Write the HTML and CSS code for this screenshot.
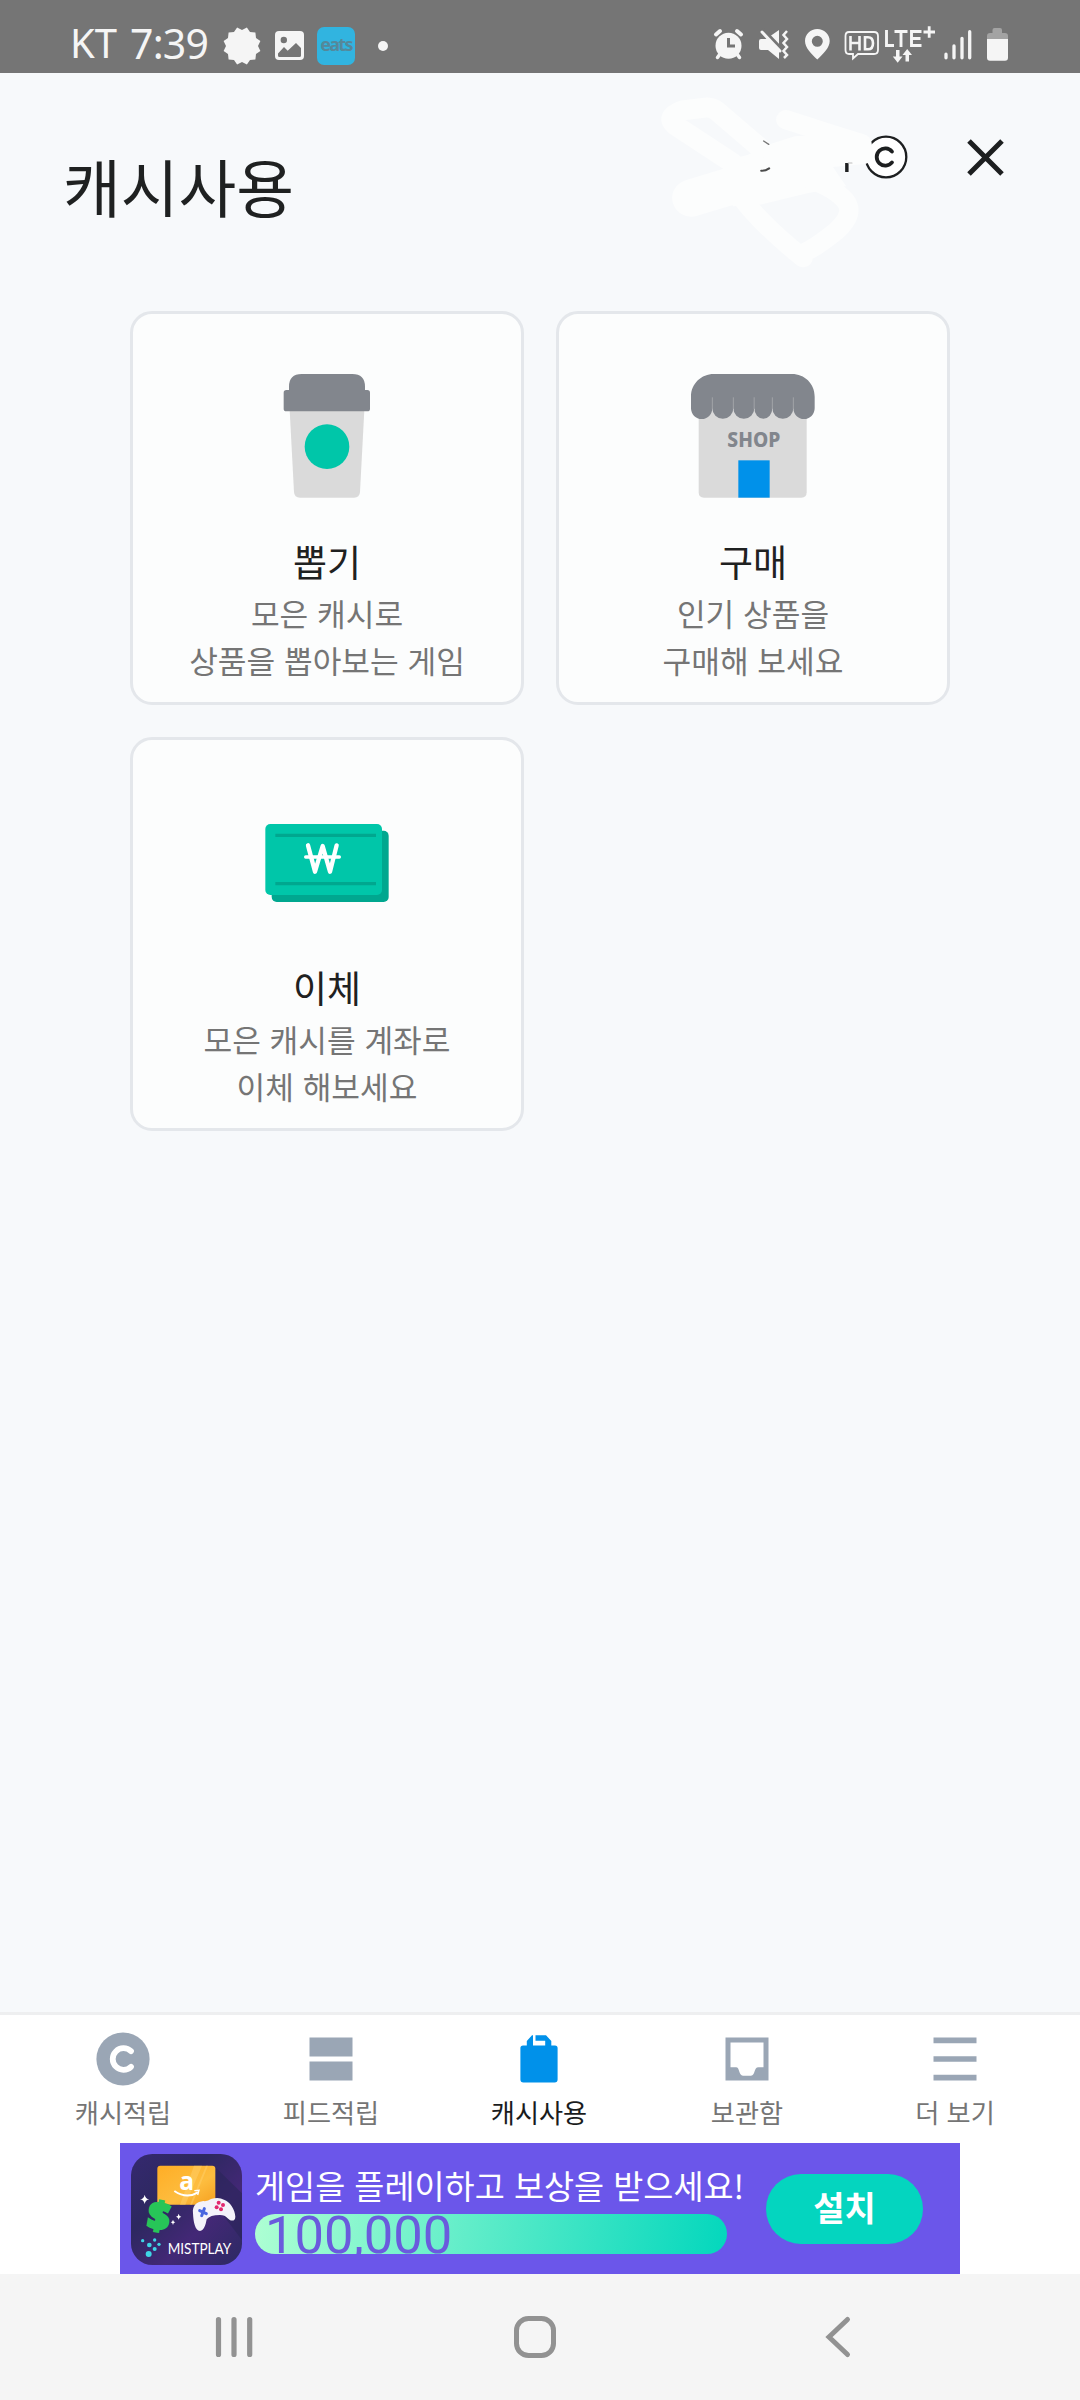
FILE: index.html
```html
<!DOCTYPE html>
<html lang="ko">
<head>
<meta charset="utf-8">
<title>캐시사용</title>
<link rel="stylesheet" href="styles.css">
</head>
<body>
<div class="app">
  <div class="status">
    <div class="status-left">
      <span class="carrier">KT</span><span class="clock">7:39</span>
      <svg class="ic-burst" viewBox="-19 -19 38 38" width="38" height="38"><path fill="#f5f5f5" d="M4.9 -18.4L8 -14L13.4 -13.4L14 -8L18.4 -4.9L16 0L18.4 4.9L14 8L13.4 13.4L8 14L4.9 18.4L0 16L-4.9 18.4L-8 14L-13.4 13.4L-14 8L-18.4 4.9L-16 0L-18.4 -4.9L-14 -8L-13.4 -13.4L-8 -14L-4.9 -18.4L0 -16Z"/></svg>
      <svg class="ic-image" viewBox="275 31 29 29" width="29" height="29"><rect x="275" y="31" width="29" height="29" rx="4" fill="#f5f5f5"/><circle cx="283.8" cy="40" r="3.2" fill="#757575"/><path fill="#757575" d="M278 53.5L284 47L287.7 50.7L296 43L301 48V55.5Q301 57 299.500 57H279.500Q278 57 278 55.500Z"/></svg>
      <span class="eats">eats</span>
      <span class="dot"></span>
    </div>
    <svg class="status-right" viewBox="700 20 320 50" width="320" height="50" fill="#f5f5f5" stroke="none">
      <circle cx="728.500" cy="45.700" r="13"/>
      <path d="M716 34.500L720 31M741 34.500L737 31" stroke="#f5f5f5" stroke-width="4" stroke-linecap="round"/>
      <path d="M720 54L717.500 57.500M737 54L739.500 57.500" stroke="#f5f5f5" stroke-width="3.500" stroke-linecap="round"/>
      <path d="M728.500 38V46H735" stroke="#757575" stroke-width="3" fill="none"/>
      <path d="M759 41Q759 39 761 39H766L779 30V59L768 50H761Q759 50 759 48Z"/>
      <path d="M762 29L782 50" stroke="#757575" stroke-width="4"/>
      <path d="M762 32L780 51" stroke="#f5f5f5" stroke-width="3" stroke-linecap="round"/>
      <path d="M787 31L783.500 35L787 39L783.500 43L787 47L783.500 51L787 55L784 58" stroke="#f5f5f5" stroke-width="2.500" fill="none"/>
      <path fill-rule="evenodd" d="M817.300 29C824 29 829.700 34 829.700 41C829.700 48 823 54 817.300 59.500C811.500 54 805 48 805 41C805 34 810.500 29 817.300 29ZM817.300 35.800A5.500 5.500 0 1 0 817.300 46.800A5.500 5.500 0 1 0 817.300 35.800Z"/>
      <path d="M849 32H874Q878 32 878 36V50Q878 54 874 54H858L853 58.500V54H849Q845.500 54 845.500 50V36Q845.500 32 849 32Z" fill="none" stroke="#f5f5f5" stroke-width="1.800"/>
      <path d="M850.500 36V50.500M859.500 36V50.500M850.500 43H859.500M865 37.200V49.300H868Q873 49.300 873 43.200Q873 37.200 868 37.200Z" fill="none" stroke="#f5f5f5" stroke-width="2.600"/>
      <path d="M886.500 30V45.500H894M894.500 31.500H907.500M901 31.500V47M921.500 31.500H911.500V45.500H921.500M911.500 38.500H920.500" fill="none" stroke="#f5f5f5" stroke-width="2.900"/>
      <path d="M923.500 32H935M929.200 26.300V37.700" stroke="#f5f5f5" stroke-width="2.800"/>
      <path d="M896 50H899.500V56.500H902.500L897.700 62.700L892.800 56.500H896ZM905.500 61.500H909V55H912L907.200 49L902.500 55H905.500Z"/>
      <path d="M946 54.200V57.800M954 46V57.800M962 38.300V57.800M969.700 31.700V57.800" stroke="#f5f5f5" stroke-width="3.300" stroke-linecap="round"/>
      <path fill="#a3a3a3" d="M992.500 33V30Q992.500 28 994.500 28H1000Q1002 28 1002 30V33H1005Q1008 33 1008 36V39H987V36Q987 33 990 33Z"/>
      <path d="M987 39H1008V57.500Q1008 60.700 1005 60.700H990Q987 60.700 987 57.500Z"/>
    </svg>
  </div>

  <header class="header">
    <h1>캐시사용</h1>
    <svg class="cash" viewBox="0 0 44 44" width="44" height="44" fill="none" stroke="#1d1f20"><circle cx="22" cy="22" r="20.300" fill="#fff" stroke-width="2.300"/><path d="M28 16.600A8.600 8.600 0 1 0 28 27.400" stroke-width="3.800" stroke-linecap="round"/></svg>
    <svg class="close" viewBox="0 0 37 37" width="37" height="37"><path d="M2 2L35 35M35 2L2 35" stroke="#1d1f20" stroke-width="5"/></svg>
    <svg class="scribble" viewBox="340 280 660 540" width="227" height="180" preserveAspectRatio="none" fill="none" stroke="#fcfdfd" stroke-linecap="round" stroke-linejoin="round">
      <path fill="#fcfdfd" stroke="none" d="M570 475L605 465L650 440L740 410L900 400L940 470L850 500L890 560L780 580L640 615L560 620Z"/>
      <path stroke-width="60" d="M640 445L515 335Q500 322 480 324L415 332Q355 355 405 385L560 490"/>
      <path stroke-width="112" d="M440 595L600 545L780 510"/>
      <path stroke-width="58" d="M715 360L850 405L935 432L940 464L780 480"/>
      <path stroke-width="56" d="M590 600Q650 680 765 775M765 760Q800 745 860 695Q920 640 885 600Q850 560 760 530"/>
      <path stroke="#777" stroke-width="4" d="M650 424L665 434"/>
      <path stroke="#4b4b4b" stroke-width="6" d="M643 513Q655 514 666 506"/>
      <path stroke="#1d1f20" stroke-width="10" stroke-linecap="butt" d="M892 490V517"/>
      <path stroke="#bbb" stroke-width="3" d="M896 490H907"/>
    </svg>
  </header>

  <main class="grid">
    <section class="card">
      <svg viewBox="435 222 372 372" width="124" height="124">
        <path fill="#dadada" d="M509 330H733L720 576Q719 593 702 593H540Q523 593 522 576Z"/>
        <path fill="#82868d" d="M507 270V260Q507 222 545 222H697Q735 222 735 260V270H742Q750 270 750 278V326Q750 334 742 334H499Q491 334 491 326V278Q491 270 499 270Z"/>
        <circle cx="621" cy="440" r="67" fill="#00c6a9"/>
      </svg>
      <h2>뽑기</h2>
      <p>모은 캐시로<br>상품을 뽑아보는 게임</p>
    </section>
    <section class="card">
      <svg viewBox="454 222 372 372" width="124" height="124">
        <path fill="#dadada" d="M477 330H801V577Q801 593 785 593H493Q477 593 477 577Z"/>
        <path fill="#82868d" d="M454 290C454 250 486 222 522 222H757C794 222 825 250 825 290V325A32 32 0 0 1 761 325A31.500 31.500 0 0 1 698 325A27 31 0 0 1 644 325A31.500 31.500 0 0 1 581 325A31.500 31.500 0 0 1 518 325A32 32 0 0 1 454 325Z"/>
        <path stroke="#b2b4b7" stroke-width="2" d="M518 292V328M581 292V328M643.500 292V328M698 292V328M761 292V328"/>
        <rect x="596" y="481" width="94" height="112" fill="#0091ea"/>
        <text x="563" y="442" textLength="159" lengthAdjust="spacingAndGlyphs" class="shop-sign">SHOP</text>
      </svg>
      <h2>구매</h2>
      <p>인기 상품을<br>구매해 보세요</p>
    </section>
    <section class="card">
      <svg viewBox="435 240 372 372" width="124" height="124">
        <rect x="455" y="332" width="351" height="214" rx="15" fill="#00a78f"/>
        <rect x="436" y="312" width="350" height="213" rx="15" fill="#00c6a9"/>
        <path stroke="#00a78f" stroke-width="10" d="M466 346H768M466 491H768"/>
        <path stroke="#fff" stroke-width="13" stroke-linecap="round" stroke-linejoin="round" fill="none" d="M564 376L585 455L608 378L630 455L650 376"/>
        <path stroke="#fff" stroke-width="10" stroke-linecap="round" d="M557 411H658"/>
      </svg>
      <h2>이체</h2>
      <p>모은 캐시를 계좌로<br>이체 해보세요</p>
    </section>
  </main>

  <nav class="tabs">
    <a class="tab">
      <svg viewBox="-27 -27 54 54" width="54" height="54"><circle r="26.600" fill="#9aa6b5"/><path d="M8 -7.800A10.800 10.800 0 1 0 8 7.800" fill="none" stroke="#fff" stroke-width="5.800" stroke-linecap="round"/></svg>
      <span>캐시적립</span>
    </a>
    <a class="tab">
      <svg viewBox="-27 -27 54 54" width="54" height="54" fill="#9aa6b5"><path d="M-21.500 -21.500H21.500V-2.500H-21.500ZM-21.500 2.500H21.500V21.500H-21.500Z"/></svg>
      <span>피드적립</span>
    </a>
    <a class="tab active">
      <svg viewBox="-27 -27 54 54" width="54" height="54" fill="#0091ea"><path d="M-16 -13.500H-12.200V-18L-7 -23.800H-6V-13.500H6.200V-18.300H-3.500V-23.800H7L12.300 -18V-13.500H16Q18.600 -13.500 18.600 -11V20.500Q18.600 23.500 15.600 23.500H-15.600Q-18.600 23.500 -18.600 20.500V-11Q-18.600 -13.500 -16 -13.500Z"/></svg>
      <span>캐시사용</span>
    </a>
    <a class="tab">
      <svg viewBox="-27 -27 54 54" width="54" height="54" fill="#9aa6b5"><path fill-rule="evenodd" d="M-21.500 -21.500H21.500V21.500H-21.500ZM-16.500 -16.500V8.300H-11C-7 8.300 -8.500 16.700 -4 16.700H4C8.500 16.700 6.500 8.300 11.500 8.300H16.500V-16.500Z"/></svg>
      <span>보관함</span>
    </a>
    <a class="tab">
      <svg viewBox="-27 -27 54 54" width="54" height="54"><path stroke="#9aa6b5" stroke-width="5.600" d="M-21.500 -18.600H21.500M-21.500 0H21.500M-21.500 18.600H21.500"/></svg>
      <span>더 보기</span>
    </a>
  </nav>

  <div class="ad-row">
    <div class="ad">
      <svg class="ad-icon" viewBox="63 72 333 333" width="111" height="111">
        <defs>
          <linearGradient id="tile" x1="0" y1="0" x2="1" y2="1"><stop offset="0" stop-color="#35296f"/><stop offset=".35" stop-color="#2d2860"/><stop offset=".65" stop-color="#432876"/><stop offset="1" stop-color="#2c2a63"/></linearGradient>
          <linearGradient id="gold" x1="0" y1="0" x2="1" y2="1"><stop offset="0" stop-color="#ffad25"/><stop offset=".6" stop-color="#fdbd3f"/><stop offset="1" stop-color="#f6a01f"/></linearGradient>
        </defs>
        <rect x="63" y="72" width="333" height="333" rx="64" fill="url(#tile)"/>
        <path fill="#2a2558" opacity=".6" d="M316 112L396 190V330L316 225Z"/>
        <rect x="142" y="107" width="174" height="117" rx="9" fill="url(#gold)"/>
        <path fill="#ffd06a" opacity=".5" d="M252 107H276L226 224H210ZM288 107H294L246 224H240Z"/>
        <text x="208" y="181" class="ad-a">a</text>
        <path d="M193 183Q230 208 264 187" fill="none" stroke="#fff" stroke-width="6"/><path d="M253 182L267 181L263 195" fill="none" stroke="#fff" stroke-width="4"/>
        <text transform="translate(108 292) rotate(10)" class="ad-dollar">$</text>
        <path fill="#f4f2fa" d="M249 250C246 225 262 215 280 213Q292 215 303 207Q326 200 342 209C360 215 375 238 376 260C376 275 362 275 352 264Q345 255 330 255Q300 255 290 268C287 285 282 302 270 303C255 302 250 275 249 250Z"/>
        <path stroke="#4967e0" stroke-width="9" stroke-linecap="round" d="M269 242L289 251M283 236L275 257"/>
        <g fill="#e2276f"><circle cx="326" cy="218" r="6"/><circle cx="339" cy="225" r="6"/><circle cx="320" cy="232" r="6"/><circle cx="333" cy="238" r="6"/></g>
        <path fill="#fff" d="M104 194Q106 206 118 208Q106 210 104 222Q102 210 90 208Q102 206 104 194ZM206 251Q207 259 214 260Q207 261 206 269Q205 261 198 260Q205 259 206 251ZM189 269Q190 276 196 277Q190 278 189 285Q188 278 182 277Q188 276 189 269Z"/>
        <g fill="#3ed6e6"><circle cx="98" cy="332" r="5"/><circle cx="134" cy="330" r="5"/><circle cx="118" cy="345" r="7"/><circle cx="147" cy="343" r="5"/><circle cx="134" cy="357" r="6"/><circle cx="116" cy="372" r="9"/></g>
        <text x="173" y="371" textLength="191" lengthAdjust="spacingAndGlyphs" class="ad-name">MISTPLAY</text>
      </svg>
      <div class="ad-copy">
        <div class="ad-title">게임을 플레이하고 보상을 받으세요!</div>
        <div class="ad-bar">100,000</div>
      </div>
      <div class="ad-btn">설치</div>
    </div>
  </div>

  <div class="sysnav">
    <svg viewBox="0 0 40 44" width="40" height="44"><path d="M4.500 4.500V39.500M20 4.500V39.500M35.700 4.500V39.500" stroke="#929292" stroke-width="5.200" stroke-linecap="round"/></svg>
    <svg class="home" viewBox="0 0 44 44" width="44" height="44"><rect x="3.500" y="3.500" width="37" height="37" rx="12" fill="none" stroke="#929292" stroke-width="5"/></svg>
    <svg viewBox="0 0 28 44" width="28" height="44"><path d="M23.500 4.500L5 22L23.500 39.500" fill="none" stroke="#929292" stroke-width="5" stroke-linecap="round"/></svg>
  </div>
</div>
</body>
</html>
```
FILE: styles.css
```css
* { box-sizing: border-box; margin: 0; padding: 0; }
body { background: #f7f8fa; font-family: "Noto Sans CJK KR", "Noto Sans", sans-serif; }
svg { display: block; flex: none; }
.app { width: 1080px; height: 2400px; display: flex; flex-direction: column; background: #f7f9fb; overflow: hidden; }

.status { height: 73px; background: #757575; display: flex; justify-content: space-between; align-items: flex-start; padding: 20px 60px 0 70px; color: #f5f5f5; }
.status-left { display: flex; align-items: center; height: 51px; font: 400 40px/46px "Noto Sans", sans-serif; }
.carrier, .clock { height: 51px; }
.carrier { width: 60px; }
.clock { width: 93px; font-size: 41px; letter-spacing: -0.800px; }
.ic-image { margin-left: 14px; }
.eats { margin-left: 13px; width: 38px; height: 38px; border-radius: 7px; background: #31b4e0; color: #55889a; font: 700 18px/35px "Noto Sans", sans-serif; text-align: center; letter-spacing: -1.700px; }
.dot { margin-left: 23px; width: 10px; height: 10px; border-radius: 50%; background: #f5f5f5; }

.header { position: relative; height: 238px; display: flex; align-items: flex-start; padding: 62px 76px 0 63px; color: #1f2121; }
.header h1 { font-size: 62.800px; line-height: 100px; font-weight: 400; margin-right: auto; }
.cash { margin: 0 59px 0 0; }
.close { margin-top: 4px; }
.scribble { position: absolute; left: 657px; top: 20px; }

.grid { flex: 1; display: grid; grid-template-columns: 394px 394px; grid-auto-rows: 394px; gap: 32px; padding-left: 130px; }
.card { border: 3px solid #e4e7eb; border-radius: 22px; background: #fcfdfd; display: flex; flex-direction: column; align-items: center; padding-top: 60px; text-align: center; }
.card h2 { margin-top: 36px; font-size: 37px; line-height: 54px; font-weight: 400; color: #1f2121; }
.card p { margin-top: 1px; font-size: 31.200px; line-height: 47px; color: #757575; }
.shop-sign { font: 800 63px "Noto Sans", sans-serif; fill: #82868d; }

.tabs { height: 131px; border-top: 3px solid #eeeff0; background: #fff; display: grid; grid-template-columns: repeat(5, 208px); padding-left: 19px; }
.tab { display: flex; flex-direction: column; align-items: center; padding-top: 17px; font-size: 26.200px; line-height: 38px; color: #757575; }
.tab span { margin-top: 7px; }
.tab.active { color: #1a1c1d; }

.ad-row { height: 131px; background: #fff; display: flex; justify-content: center; }
.ad { width: 840px; background: #6b56ea; display: flex; align-items: flex-start; padding: 11px 37px 0 11px; }
.ad-copy { margin-left: 13px; color: #fff; }
.ad-title { width: 500px; margin: 8px -28px 0 0; font-size: 32.700px; line-height: 46px; height: 52px; white-space: nowrap; }
.ad-bar { width: 472px; height: 40px; border-radius: 20px; background: linear-gradient(100deg, #aeffd3, #03d7bd); overflow: hidden; color: #6a5bdd; font: 400 52.500px/42px Roboto, sans-serif; padding-left: 10px; }
.ad-btn { margin: 20px 0 0 auto; width: 157px; height: 70px; border-radius: 35px; background: #04d5bf; color: #fff; font-size: 34px; font-weight: 700; line-height: 65px; text-align: center; }
.ad-a { font: 700 74px "Open Sans", sans-serif; fill: #fff; }
.ad-dollar { font: 800 112px "Open Sans", sans-serif; fill: #27c558; stroke: #27c558; stroke-width: 8px; }
.ad-name { font: 400 46px Lato, sans-serif; fill: #fff; }

.sysnav { height: 126px; background: #f5f5f5; display: flex; align-items: center; justify-content: space-between; padding: 0 228px 0 214px; }
.home { margin: 0 4px 0 -4px; }
```
